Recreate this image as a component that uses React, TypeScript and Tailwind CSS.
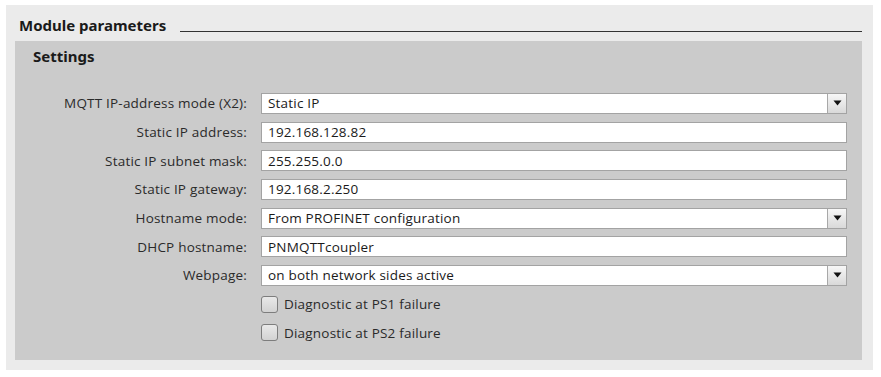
import React from 'react'

const FONT = { fontFamily: '"Noto Sans", "Open Sans", sans-serif' }
const BODY = { fontFamily: '"Open Sans", "Noto Sans", sans-serif' }

interface RowProps {
  label: string
  value: string
  dropdown?: boolean
}

function DropArrow() {
  return (
    <div className="w-[19px] h-full shrink-0 flex items-center justify-center border-l border-[#a8a8a8] bg-gradient-to-b from-[#f7f7f7] to-[#d9d9d9]">
      <svg width="9" height="6" viewBox="0 0 9 6">
        <path d="M0.5 0.5 H8.5 L4.5 5.5 Z" fill="#111" />
      </svg>
    </div>
  )
}

function FieldRow({ label, value, dropdown }: RowProps) {
  return (
    <div className="flex items-center h-[28.7px]">
      <div className="w-[233px] text-right text-[13.5px] tracking-[0.2px] text-[#2a2a2a] pr-px">{label}</div>
      <div className="ml-[13px] w-[586px] h-[21px] flex items-stretch bg-white border border-[#a3a3a3]">
        <div className="flex-1 flex items-center pl-[6px] text-[13.5px] tracking-[0.2px] text-[#1a1a1a]">{value}</div>
        {dropdown && <DropArrow />}
      </div>
    </div>
  )
}

function CheckRow({ label }: { label: string }) {
  return (
    <div className="flex items-center h-[28.7px]">
      <div className="ml-[246px] w-[17px] h-[17px] rounded-[3px] border border-[#7d7d7d] bg-gradient-to-b from-[#e9e9e9] to-[#d2d2d2]" />
      <span className="ml-[6px] text-[13.5px] tracking-[0.2px] text-[#2a2a2a]">{label}</span>
    </div>
  )
}

export default function App() {
  const rows: RowProps[] = [
    { label: 'MQTT IP-address mode (X2):', value: 'Static IP', dropdown: true },
    { label: 'Static IP address:', value: '192.168.128.82' },
    { label: 'Static IP subnet mask:', value: '255.255.0.0' },
    { label: 'Static IP gateway:', value: '192.168.2.250' },
    { label: 'Hostname mode:', value: 'From PROFINET configuration', dropdown: true },
    { label: 'DHCP hostname:', value: 'PNMQTTcoupler' },
    { label: 'Webpage:', value: 'on both network sides active', dropdown: true },
  ]

  return (
    <div className="w-[881px] h-[377px] bg-white pt-[5px] pl-[6px]" style={FONT}>
      <div className="w-[867px] h-[365px] bg-[#ebebeb]">
        {/* Section title */}
        <div className="flex items-end h-[36px] pl-[13px] pr-[11px] pb-[8px]">
          <span className="text-[15px] font-bold text-[#1a1a1a] leading-none">Module parameters</span>
          <div className="flex-1 ml-[14px] border-b border-[#333] mb-[1px]" />
        </div>

        {/* Settings group */}
        <div className="ml-[9px] w-[847px] h-[319px] bg-[#cbcbcb]">
          <div className="h-[38px] pl-[18px] pt-[4px] text-[15px] font-bold text-[#1a1a1a]">Settings</div>
          <div className="pt-[10px]" style={BODY}>
            {rows.map((r) => (
              <FieldRow key={r.label} {...r} />
            ))}
            <CheckRow label="Diagnostic at PS1 failure" />
            <CheckRow label="Diagnostic at PS2 failure" />
          </div>
        </div>
      </div>
    </div>
  )
}
